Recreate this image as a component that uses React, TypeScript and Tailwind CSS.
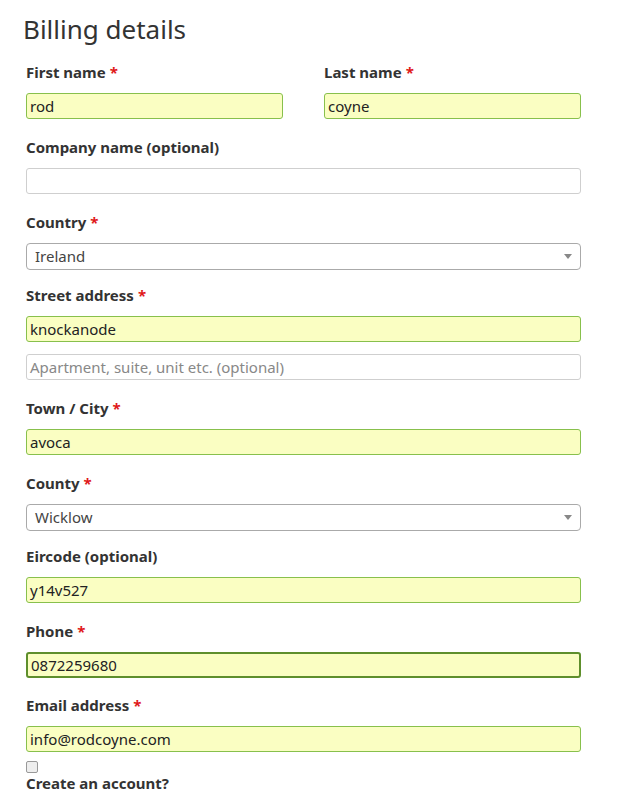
function Label({ text, req }: { text: string; req?: boolean }) {
  return (
    <div className="mb-[11px] h-5 text-[15px] font-bold leading-5 text-[#333]">
      {text}
      {req && <span className="ml-1 text-[#e01a1a]">*</span>}
    </div>
  );
}

function Filled({ value, focus }: { value: string; focus?: boolean }) {
  return (
    <div
      className={
        "flex h-[26px] items-center rounded-[3px] bg-[#fafec2] pl-[3px] text-[15px] text-[#222] " +
        (focus ? "border-2 border-[#5e8f2c]" : "border border-[#88c04c]")
      }
    >
      {value}
    </div>
  );
}

function Empty({ placeholder }: { placeholder?: string }) {
  return (
    <div className="flex h-[26px] items-center rounded-[3px] border border-[#cfcfcf] bg-white pl-[3px] text-[15px] text-[#888]">
      {placeholder}
    </div>
  );
}

function Select({ value }: { value: string }) {
  return (
    <div className="flex h-[27px] items-center justify-between rounded-[4px] border border-[#aaa] bg-white pl-2 pr-2 text-[15px] text-[#444]">
      <span>{value}</span>
      <span className="h-0 w-0 border-x-[4px] border-t-[5px] border-x-transparent border-t-[#888]" />
    </div>
  );
}

export default function App() {
  return (
    <div className="min-h-[797px] w-[621px] bg-white font-['Lato','Noto_Sans',sans-serif]">
      <div className="ml-[26px] w-[555px]">
        <h3 className="pt-[12px] pl-[-2px] -ml-[3px] h-[62px] text-[26px] leading-[34px] text-[#333]">Billing details</h3>
        <div className="mb-[18px] grid grid-cols-2 gap-[41px]">
          <div>
            <Label text="First name" req />
            <Filled value="rod" />
          </div>
          <div>
            <Label text="Last name" req />
            <Filled value="coyne" />
          </div>
        </div>
        <Label text="Company name (optional)" />
        <div className="mb-[18px]"><Empty /></div>
        <Label text="Country" req />
        <div className="mb-[15px]"><Select value="Ireland" /></div>
        <Label text="Street address" req />
        <div className="mb-[12px]"><Filled value="knockanode" /></div>
        <div className="mb-[18px]"><Empty placeholder="Apartment, suite, unit etc. (optional)" /></div>
        <Label text="Town / City" req />
        <div className="mb-[18px]"><Filled value="avoca" /></div>
        <Label text="County" req />
        <div className="mb-[15px]"><Select value="Wicklow" /></div>
        <Label text="Eircode (optional)" />
        <div className="mb-[18px]"><Filled value="y14v527" /></div>
        <Label text="Phone" req />
        <div className="mb-[17px]"><Filled value="0872259680" focus /></div>
        <Label text="Email address" req />
        <div className="mb-[9px]"><Filled value="info@rodcoyne.com" /></div>
        <div className="h-[12px] w-[12px] rounded-[2px] border border-[#999] bg-[#eee]" />
        <div className="text-[15px] font-bold leading-5 text-[#333]">Create an account?</div>
      </div>
    </div>
  );
}
